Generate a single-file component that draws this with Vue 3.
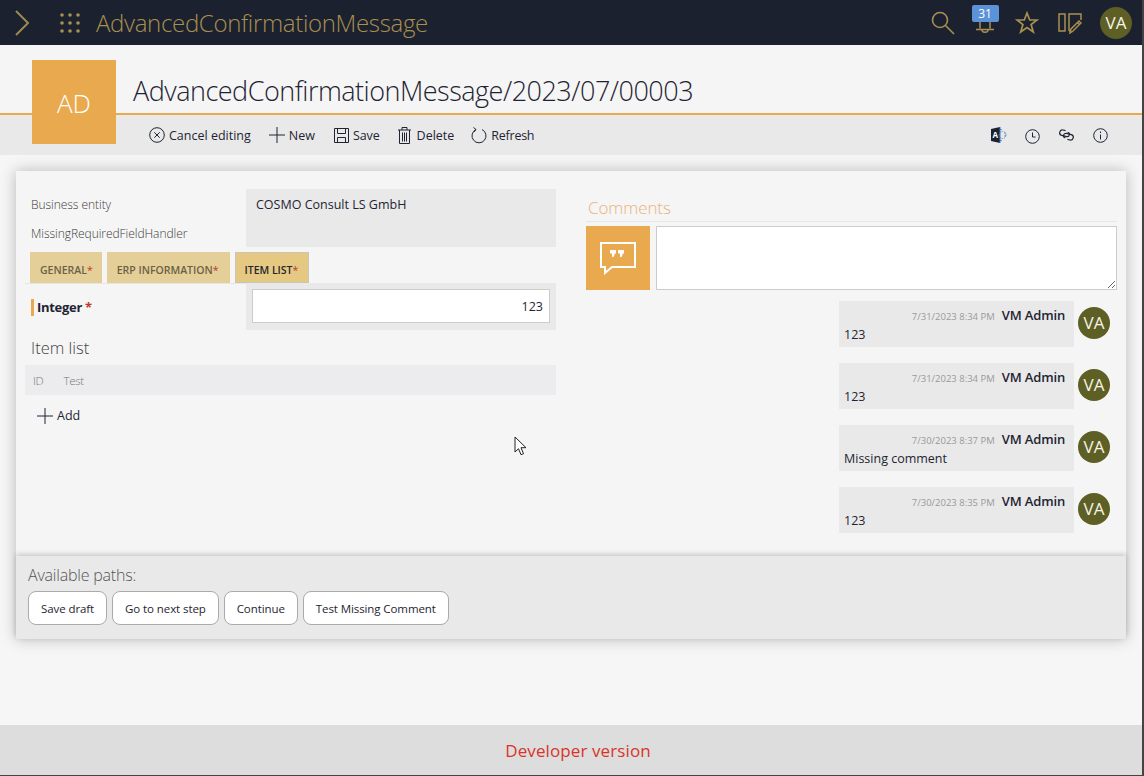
<script setup>
const tabs = [
  { label: 'GENERAL', active: false },
  { label: 'ERP INFORMATION', active: false },
  { label: 'ITEM LIST', active: true }
];

const comments = [
  { date: '7/31/2023 8:34 PM', text: '123' },
  { date: '7/31/2023 8:34 PM', text: '123' },
  { date: '7/30/2023 8:37 PM', text: 'Missing comment' },
  { date: '7/30/2023 8:35 PM', text: '123' }
];

const paths = ['Save draft', 'Go to next step', 'Continue', 'Test Missing Comment'];
</script>

<template>
  <div class="page">
    <header class="topbar">
      <svg class="chevron" width="16" height="26" viewBox="0 0 16 26"><path d="M2 1l12 12L2 25" fill="none" stroke="#9a8a4e" stroke-width="2" /></svg>
      <svg class="apps" width="20" height="20" viewBox="0 0 20 20" fill="#a8904f">
        <circle cx="2" cy="2" r="1.8" /><circle cx="10" cy="2" r="1.8" /><circle cx="18" cy="2" r="1.8" />
        <circle cx="2" cy="10" r="1.8" /><circle cx="10" cy="10" r="1.8" /><circle cx="18" cy="10" r="1.8" />
        <circle cx="2" cy="18" r="1.8" /><circle cx="10" cy="18" r="1.8" /><circle cx="18" cy="18" r="1.8" />
      </svg>
      <span class="app-title">AdvancedConfirmationMessage</span>
      <div class="top-icons">
        <svg width="24" height="24" viewBox="0 0 24 24" fill="none" stroke="#a8904f" stroke-width="1.6"><circle cx="9" cy="9" r="7.5" /><path d="M14.5 14.5l8.5 8.5" /></svg>
        <div class="bell">
          <span class="bell-badge">31</span>
          <svg width="20" height="12" viewBox="0 0 20 12" fill="none" stroke="#a8904f" stroke-width="1.5"><path d="M5 0v6.5M15 0v6.5M1 7.5h18M7 8c0 3 6 3 6 0" /></svg>
        </div>
        <svg width="24" height="23" viewBox="0 0 24 23" fill="none" stroke="#a8904f" stroke-width="1.7"><path d="M12 2l2.7 7h7.3l-5.900 4.500 2.200 7.500-6.300-4.500-6.300 4.500 2.200-7.500L2 9h7.300z" /></svg>
        <svg width="24" height="22" viewBox="0 0 24 22" fill="none" stroke="#a8904f" stroke-width="1.5"><path d="M1 2h6v17H1zM11 19V2h12v6M11 19h2" /><path d="M12 21l1-4 8-8 2 2-8 8zM19.500 10.500l2 2" /></svg>
        <span class="avatar avatar-top">VA</span>
      </div>
    </header>

    <section class="title-band">
      <div class="tile">AD</div>
      <h1 class="doc-title">AdvancedConfirmationMessage/2023/07/00003</h1>
    </section>

    <nav class="toolbar">
      <div class="actions">
        <button class="action">
          <svg width="16" height="16" viewBox="0 0 16 16" fill="none" stroke="#1f2433"><circle cx="8" cy="8" r="7.300" /><path d="M5.300 5.300l5.400 5.400M10.700 5.300l-5.400 5.400" /></svg>
          Cancel editing
        </button>
        <button class="action">
          <svg width="16" height="16" viewBox="0 0 16 16" fill="none" stroke="#1f2433"><path d="M8 0v16M0 8h16" /></svg>
          New
        </button>
        <button class="action action-save">
          <svg width="15" height="15" viewBox="0 0 15 15" fill="none" stroke="#1f2433"><path d="M.5.500h14v14H.5zM3.500.500v5h8v-5M3.500 14.500v-5h8v5" /></svg>
          Save
        </button>
        <button class="action action-delete">
          <svg width="13" height="17" viewBox="0 0 13 17" fill="none" stroke="#1f2433"><path d="M0 3h13M4 3V.500h5V3M1.500 3v13.500h10V3M4.500 5.500v9M6.500 5.500v9M8.500 5.500v9" /></svg>
          Delete
        </button>
        <button class="action action-refresh">
          <svg width="16" height="17" viewBox="0 0 16 17" fill="none" stroke="#1f2433"><path d="M5 2.500a7 7 0 1 0 6 0M2.500 .500L5 2.500 3 5" /></svg>
          Refresh
        </button>
      </div>
      <div class="tools">
        <svg width="16" height="16" viewBox="0 0 16 16"><path d="M0 2l9-2v16l-9-2z" fill="#1c2130" /><path d="M9 2.500h2M14 5v6M9 13.500h2" fill="none" stroke="#7b93b3" stroke-dasharray="2 1" /><circle cx="11.500" cy="8" r="3.500" fill="none" stroke="#7b93b3" stroke-dasharray="1.500 1" /><path d="M9 0v16" stroke="#2b7cd3" /><text x="1.500" y="11" font-size="8" font-weight="700" fill="#fff" font-family="'Open Sans', sans-serif">A</text></svg>
        <svg class="tool-clock" width="15" height="15" viewBox="0 0 15 15" fill="none" stroke="#1f2433"><circle cx="7.500" cy="7.500" r="6.800" /><path d="M7.500 3.500v4.500h3" /></svg>
        <svg width="17" height="14" viewBox="0 0 17 14" fill="none" stroke="#1f2433" stroke-width="1.200"><g transform="rotate(14 8.500 7)"><path d="M6.500 3H4a2.700 2.700 0 0 0 0 5.500h5a2.200 2.200 0 0 0 0-4.500" /><path d="M10.500 11H13a2.700 2.700 0 0 0 0-5.500H8a2.200 2.200 0 0 0 0 4.500" /></g></svg>
        <svg width="15" height="15" viewBox="0 0 15 15" fill="none" stroke="#1f2433"><circle cx="7.500" cy="7.500" r="6.800" /><path d="M7.500 6.500v5M7.500 3.500v1.500" /></svg>
      </div>
    </nav>

    <main class="content">
      <section class="card">
        <div class="card-body">
          <div class="left-col">
            <div class="entity">
              <div class="entity-labels">
                <span>Business entity</span>
                <span>MissingRequiredFieldHandler</span>
              </div>
              <div class="entity-value">COSMO Consult LS GmbH</div>
            </div>

            <div class="tabs">
              <div v-for="tab in tabs" :key="tab.label" :class="['tab', { active: tab.active }]">
                {{ tab.label }}<span class="req">*</span>
              </div>
            </div>

            <div class="field">
              <label class="field-label">Integer <span class="req">*</span></label>
              <div class="field-box">
                <div class="input">123</div>
              </div>
            </div>

            <h2 class="list-title">Item list</h2>
            <div class="list-head">
              <span>ID</span>
              <span>Test</span>
            </div>
            <button class="add">
              <svg width="16" height="16" viewBox="0 0 16 16" fill="none" stroke="#1f2433"><path d="M8 0v16M0 8h16" /></svg>
              Add
            </button>
          </div>

          <div class="right-col">
            <h2 class="comments-title">Comments</h2>
            <div class="composer">
              <div class="composer-icon">
                <svg width="36" height="34" viewBox="0 0 36 34" fill="none" stroke="#fff" stroke-width="2"><path d="M1 2h34v24H12l-7 6v-6H1z" /><path d="M10 9h6v3.500h-1l-1.500 3.500H12v-3.500h-2zM18 9h6v3.500h-1l-1.500 3.500H20v-3.500h-2z" fill="#fff" stroke="none" /></svg>
              </div>
              <textarea class="composer-input"></textarea>
            </div>
            <div class="comment-list">
              <div v-for="(c, i) in comments" :key="i" class="comment">
                <div class="bubble">
                  <div class="bubble-head">
                    <span class="date">{{ c.date }}</span>
                    <span class="author">VM Admin</span>
                  </div>
                  <div class="bubble-text">{{ c.text }}</div>
                </div>
                <span class="avatar avatar-comment">VA</span>
              </div>
            </div>
          </div>
        </div>

        <footer class="paths">
          <div class="paths-title">Available paths:</div>
          <div class="paths-btns">
            <button v-for="p in paths" :key="p" class="path-btn">{{ p }}</button>
          </div>
        </footer>
      </section>
    </main>

    <footer class="dev-bar">Developer version</footer>

    <svg class="cursor" width="14" height="21" viewBox="0 0 14 21"><path d="M1 1v15l3.500-3.300 2.500 6 2.500-1-2.500-6h5z" fill="#fff" stroke="#222" /></svg>
  </div>
</template>

<style>
html, body {
  margin: 0;
  background: #fff;
}
</style>

<style scoped>
.page {
  position: relative;
  width: 1142px;
  height: 775px;
  display: flex;
  flex-direction: column;
  background: #f6f6f6;
  font-family: "Open Sans", "Noto Sans", sans-serif;
  color: #1f2433;
  overflow: hidden;
  border-right: 2px solid #444;
  border-bottom: 1px solid #444;
}

button {
  font-family: inherit;
  background: none;
  border: none;
  padding: 0;
  color: inherit;
}

/* top bar */
.topbar {
  height: 45px;
  flex: none;
  background: #1c2130;
  display: flex;
  align-items: center;
  padding-left: 14px;
  padding-right: 10px;
}

.chevron {
  margin-right: 30px;
}

.apps {
  margin-right: 16px;
}

.app-title {
  font-size: 24px;
  font-weight: 300;
  letter-spacing: -0.33px;
  color: #a8904f;
}

.top-icons {
  margin-left: auto;
  display: flex;
  align-items: center;
  gap: 19px;
}

.avatar-top {
  margin-left: -1px;
}

.bell {
  width: 28px;
  height: 32px;
  display: flex;
  flex-direction: column;
  align-items: center;
  margin-top: -4px;
  margin-left: -3px;
  margin-right: -3px;
}

.bell-badge {
  width: 27px;
  height: 17px;
  background: #5b93d8;
  border-radius: 2px;
  color: #fff;
  font-size: 12px;
  line-height: 17px;
  text-align: center;
}

.avatar {
  width: 32px;
  height: 32px;
  flex: none;
  border-radius: 50%;
  background: #5e5f24;
  color: #f5f5e8;
  font-size: 17px;
  line-height: 32px;
  text-align: center;
}

.avatar-comment {
  margin-bottom: 2px;
}

/* title band */
.title-band {
  position: relative;
  height: 68px;
  flex: none;
  background: #f5f5f5;
  border-bottom: 2px solid #e8a94f;
  display: flex;
  align-items: flex-end;
  padding-left: 133px;
}

.tile {
  position: absolute;
  left: 32px;
  top: 15px;
  z-index: 1;
  width: 84px;
  height: 84px;
  background: #e8a94f;
  color: #fff;
  font-size: 26px;
  font-weight: 300;
  line-height: 87px;
  text-align: center;
}

.doc-title {
  margin: 0 0 4px;
  font-size: 27px;
  font-weight: 300;
  letter-spacing: -0.5px;
  color: #1f2433;
}

/* toolbar */
.toolbar {
  height: 40px;
  flex: none;
  background: #e9e9e9;
  display: flex;
  align-items: center;
  justify-content: space-between;
  padding-left: 149px;
  padding-right: 34px;
}

.actions {
  display: flex;
  align-items: center;
  gap: 18px;
}

.action {
  display: flex;
  align-items: center;
  gap: 4px;
  font-size: 12.500px;
  color: #1f2433;
}

.action-save {
  margin-left: 1px;
  letter-spacing: -0.1px;
}

.action-delete {
  gap: 6px;
}

.action-refresh {
  margin-left: -1px;
  letter-spacing: -0.25px;
}

.tools {
  display: flex;
  align-items: center;
  gap: 18px;
}

.tool-clock {
  margin-top: 2px;
}

/* card */
.content {
  flex: 1;
  padding: 16px 16px 0;
}

.card {
  width: 1110px;
  height: 468px;
  display: flex;
  flex-direction: column;
  background: #f5f5f5;
  box-shadow: 0 0 14px rgba(0, 0, 0, 0.25);
}

.card-body {
  flex: 1;
  display: flex;
  padding: 18px 9px 0;
  gap: 30px;
}

.left-col {
  width: 531px;
  flex: none;
}

.right-col {
  flex: 1;
}

.entity {
  display: flex;
  height: 58px;
}

.entity-labels {
  width: 221px;
  flex: none;
  box-sizing: border-box;
  padding-left: 6px;
  padding-top: 7px;
  display: flex;
  flex-direction: column;
  gap: 12px;
  font-size: 12px;
  letter-spacing: -0.05px;
  font-weight: 300;
  line-height: 17px;
  color: #3c3c3c;
}

.entity-value {
  flex: 1;
  background: #e9e9e9;
  padding: 7px 10px;
  font-size: 12.500px;
  line-height: 17px;
}

/* tabs */
.tabs {
  display: flex;
  gap: 5px;
  padding-left: 5px;
  margin-top: 5px;
  height: 31px;
  border-bottom: 1px solid #e6e6e6;
}

.tab {
  padding: 0 11px 0 10px;
  background: #e5cf98;
  color: #6a6246;
  font-size: 10.500px;
  font-weight: 600;
  line-height: 36px;
}

.tab:first-child {
  padding-right: 9px;
}

.tab.active {
  background: #e5c982;
  color: #22252f;
  outline: 1px solid #c9c6b8;
  outline-offset: -1px;
}

.tab .req {
  font-weight: 400;
}

.req {
  color: #c0392b;
}

/* integer field */
.field {
  display: flex;
  height: 47px;
  margin-top: -1px;
}

.field-label {
  width: 215px;
  flex: none;
  margin: 16px 0 0 6px;
  height: 17px;
  border-left: 3px solid #e8a94f;
  padding-left: 3px;
  box-sizing: border-box;
  font-size: 13px;
  font-weight: 700;
  letter-spacing: -0.3px;
  line-height: 17px;
}

.field-box {
  flex: 1;
  background: #e9e9e9;
  padding: 6px 6px 7px;
}

.input {
  height: 32px;
  background: #fff;
  border: 1px solid #ccc;
  text-align: right;
  padding-right: 6px;
  font-size: 12.500px;
  line-height: 34px;
}

.list-title {
  margin: 7px 0 0 6px;
  font-size: 16.500px;
  font-weight: 300;
  line-height: 22px;
  color: #444;
}

.list-head {
  margin-top: 6px;
  height: 30px;
  background: #ececee;
  display: flex;
  align-items: center;
  gap: 20px;
  padding-left: 8px;
  font-size: 11.500px;
  font-weight: 300;
  letter-spacing: -0.3px;
  color: #777;
}

.add {
  margin: 12px 0 0 12px;
  display: flex;
  align-items: center;
  gap: 4px;
  font-size: 12.500px;
}

/* comments */
.comments-title {
  margin: 0;
  height: 33px;
  box-sizing: border-box;
  padding-left: 2px;
  border-bottom: 1px solid #e6e6e6;
  font-size: 17px;
  font-weight: 300;
  line-height: 38px;
  letter-spacing: -0.1px;
  color: #e8b47a;
}

.composer {
  display: flex;
  gap: 6px;
  margin-top: 4px;
}

.composer-icon {
  width: 64px;
  height: 64px;
  flex: none;
  background: #e8a94f;
  display: flex;
  align-items: center;
  justify-content: center;
}

.composer-input {
  flex: 1;
  height: 64px;
  box-sizing: border-box;
  background: #fff;
  border: 1px solid #ccc;
  margin: 0;
  padding: 0;
  outline: none;
}

.comment-list {
  margin-top: 11px;
  padding-right: 7px;
  display: flex;
  flex-direction: column;
  gap: 16px;
}

.comment {
  display: flex;
  justify-content: flex-end;
  align-items: center;
  gap: 4px;
}

.bubble {
  width: 235px;
  height: 46px;
  background: #e9e9e9;
  box-sizing: border-box;
  padding: 5px 9px 0 5px;
}

.bubble-head {
  display: flex;
  justify-content: flex-end;
  align-items: baseline;
  gap: 7px;
}

.date {
  font-size: 9.500px;
  color: #999;
}

.author {
  font-size: 13px;
  font-weight: 600;
  letter-spacing: -0.15px;
}

.bubble-text {
  font-size: 12.500px;
  line-height: 17px;
  margin-top: 2px;
}

/* paths */
.paths {
  height: 83px;
  flex: none;
  box-sizing: border-box;
  background: #e9e9e9;
  padding: 8px 12px 0;
  box-shadow: 0 -2px 5px rgba(0, 0, 0, 0.18);
}

.paths-title {
  font-size: 16px;
  font-weight: 300;
  letter-spacing: -0.2px;
  line-height: 22px;
  color: #555;
}

.paths-btns {
  display: flex;
  gap: 5px;
  margin-top: 5px;
}

.path-btn {
  height: 34px;
  padding: 0 12px;
  background: #fff;
  border: 1px solid #aaa;
  border-radius: 8px;
  font-size: 11.500px;
  letter-spacing: -0.09px;
}

.dev-bar {
  height: 50px;
  flex: none;
  box-sizing: border-box;
  padding-left: 14px;
  background: #ddd;
  color: #d9342b;
  font-size: 17px;
  letter-spacing: 0.1px;
  line-height: 52px;
  text-align: center;
}

.cursor {
  position: absolute;
  left: 514px;
  top: 436px;
}
</style>
